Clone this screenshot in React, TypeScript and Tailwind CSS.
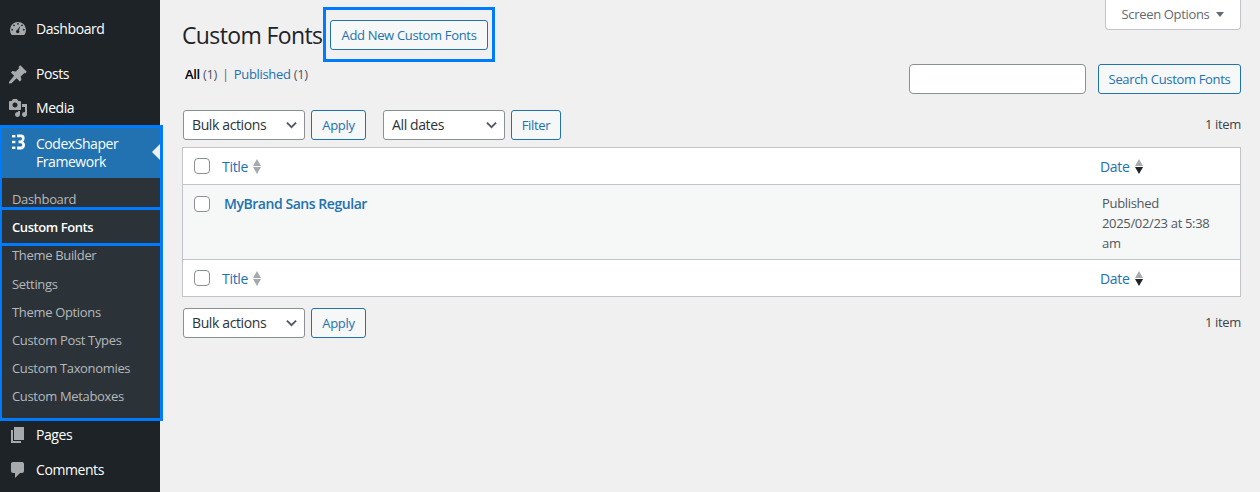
import type { ReactNode } from "react";

const subItems = ["Theme Builder", "Settings", "Theme Options", "Custom Post Types", "Custom Taxonomies", "Custom Metaboxes"];

function GaugeIcon() {
  return (
    <svg viewBox="0 0 20 20" className="w-5 h-5" fill="#a7aaad">
      <path fillRule="evenodd" d="M3.8 16A8 8 0 1 1 16.200 16ZM10 3.900a.9.9 0 1 0 0 1.800.9.9 0 0 0 0-1.800ZM6 5.400a.9.9 0 1 0 0 1.800.9.9 0 0 0 0-1.800ZM14 5.400a.9.9 0 1 0 0 1.800.9.9 0 0 0 0-1.800ZM4.200 9.800a.9.9 0 1 0 0 1.800.9.9 0 0 0 0-1.800ZM15.800 9.800a.9.9 0 1 0 0 1.800.9.9 0 0 0 0-1.800ZM12.300 6.800 9.200 11.100a1.600 1.600 0 1 0 1.700.5Z" />
    </svg>
  );
}

function PinIcon() {
  return (
    <svg viewBox="0 0 20 20" className="w-5 h-5" fill="#a7aaad">
      <path d="M10.400 3 12.300 1.200 18.800 7.700 17 9.600 16.400 9 12.700 12.400 13.400 15.900 11.800 17.400 8.600 14.200 3.500 19.300 1 19.400 1 17.900 6.100 11.700 2.900 8.500 4.400 7 7.900 7.600 11.300 3.900Z" />
    </svg>
  );
}

function MediaIcon() {
  return (
    <svg viewBox="0 0 20 20" className="w-5 h-5" fill="#a7aaad">
      <path d="M13 11V4c0-.55-.45-1-1-1h-1.670L9 1H5L3.670 3H2c-.55 0-1 .45-1 1v7c0 .55.45 1 1 1h10c.55 0 1-.45 1-1zM7 4.500c1.380 0 2.500 1.120 2.500 2.500S8.380 9.500 7 9.500 4.500 8.380 4.500 7 5.620 4.500 7 4.500zM14 6h5v10.500c0 1.380-1.120 2.500-2.500 2.500S14 17.880 14 16.500s1.120-2.500 2.500-2.500c.17 0 .34.02.5.05V9h-3V6zm-4 8.050V13h2v3.500c0 1.380-1.120 2.500-2.500 2.500S7 17.880 7 16.500 8.120 14 9.500 14c.17 0 .34.02.5.05z" />
    </svg>
  );
}

function PagesIcon() {
  return (
    <svg viewBox="0 0 20 20" className="w-5 h-5" fill="#a7aaad">
      <path d="M6 15V2h10v13H6zm-1 1h8v2H3V5h2v11z" />
    </svg>
  );
}

function CommentsIcon() {
  return (
    <svg viewBox="0 0 20 20" className="w-5 h-5" fill="#a7aaad">
      <path d="M5 2h9c1.100 0 2 .9 2 2v7c0 1.100-.9 2-2 2h-2l-5 5v-5H5c-1.100 0-2-.9-2-2V4c0-1.100.9-2 2-2z" />
    </svg>
  );
}

function BrandIcon() {
  return (
    <svg viewBox="0 0 13 16" className="w-[13px] h-4 -mt-[1px]" fill="#fff">
      <rect x="0" y="1" width="3.400" height="2.400" />
      <rect x="0" y="6.800" width="3.400" height="2.400" />
      <rect x="0" y="12.600" width="3.400" height="2.400" />
      <path d="M5 .5H9.200C11.500 .5 12.600 2 12.600 4C12.600 5.600 12 6.600 11.200 7.600C12.200 8.500 13 9.600 13 11C13 13.600 11.400 15.500 9 15.500H5V12.600H8.800C9.800 12.600 10.200 11.900 10.200 11C10.200 10 9.700 9.300 8.800 9.300H6.500V6.400H8.800C9.600 6.400 9.900 5.600 9.900 4.800C9.900 4 9.600 3.300 8.800 3.300H5Z" />
    </svg>
  );
}

function MenuItem({ icon, label, className }: { icon: ReactNode; label: string; className: string }) {
  return (
    <div className={`flex items-center text-white text-[14px] tracking-[-0.42px] ${className}`}>
      <span className="w-9 flex justify-center">{icon}</span>
      <span className="-mt-[1px]">{label}</span>
    </div>
  );
}

function SortArrows({ active }: { active?: boolean }) {
  return (
    <span className="flex flex-col gap-[1px] ml-[5px]">
      <span className="w-0 h-0 border-x-[4.5px] border-x-transparent border-b-[7px] border-b-[#a7aaad]" />
      <span className={`w-0 h-0 border-x-[4.5px] border-x-transparent border-t-[7px] ${active ? "border-t-[#1d2327]" : "border-t-[#a7aaad]"}`} />
    </span>
  );
}

function OutlineButton({ label, className }: { label: string; className: string }) {
  return (
    <button className={`h-[30px] pt-[1px] border border-[#2271b1] rounded-[3px] bg-[#f6f7f7] text-[#2271b1] text-[13px] ${className}`}>
      {label}
    </button>
  );
}

function FakeSelect({ label }: { label: string }) {
  return (
    <div className="w-[122px] h-[30px] bg-white border border-[#8c8f94] rounded-[3px] flex items-center justify-between pl-2 pr-[7px] text-[14px] tracking-[-0.38px] text-[#2c3338]">
      <span className="-mt-[1px]">{label}</span>
      <svg viewBox="0 0 12 8" className="w-[11px] h-[8px]" fill="none" stroke="#50575e" strokeWidth="2">
        <path d="M1 1.500 6 6.300 11 1.500" />
      </svg>
    </div>
  );
}

function Checkbox() {
  return <span className="block w-4 h-4 bg-white border border-[#8c8f94] rounded-[4px]" />;
}

function HeaderRow({ top }: { top?: boolean }) {
  return (
    <div className={`flex h-[37px] bg-white ${top ? "border-b" : "border-t"} border-[#c3c4c7]`}>
      <div className="flex flex-1 items-center pl-[11px]">
        <Checkbox />
        <span className="ml-[12px] text-[14px] tracking-[-0.3px] text-[#2271b1]">Title</span>
        <SortArrows />
      </div>
      <div className="flex w-[140px] items-center">
        <span className="text-[14px] tracking-[-0.3px] text-[#2271b1]">Date</span>
        <SortArrows active />
      </div>
    </div>
  );
}

export default function App() {
  return (
    <div
      className="relative flex w-[1260px] h-[492px] overflow-hidden bg-[#f0f0f1] text-[13px] tracking-[-0.33px] text-[#3c434a]"
      style={{ fontFamily: '"Open Sans", "Noto Sans", sans-serif' }}
    >
      {/* Admin menu */}
      <aside className="w-40 shrink-0 bg-[#1d2327] pt-[12px]">
        <MenuItem icon={<GaugeIcon />} label="Dashboard" className="h-[34px]" />
        <div className="h-[11px]" />
        <MenuItem icon={<PinIcon />} label="Posts" className="h-[34px]" />
        <MenuItem icon={<MediaIcon />} label="Media" className="h-[34px]" />
        <div className="relative h-[53px] bg-[#2271b1] text-white text-[14px] tracking-[-0.45px] leading-[18px] flex pt-[10px]">
          <span className="w-9 flex justify-center pl-[1px]"><BrandIcon /></span>
          <span>CodexShaper<br />Framework</span>
          <span className="absolute right-0 top-[19px] w-0 h-0 border-y-[8px] border-y-transparent border-r-[8px] border-r-[#f0f0f1]" />
        </div>
        <div className="bg-[#2c3338] h-[242px] pt-[5.7px] text-[13px] text-[#b4b9be]">
          <div className="h-[28.2px] flex items-center pl-3 pt-[4px]">Dashboard</div>
          <div className="h-[28.2px] flex items-center pl-3 pt-[4px] font-semibold tracking-[-0.42px] text-white">Custom Fonts</div>
          {subItems.map((item) => (
            <div key={item} className="h-[28.2px] flex items-center pl-3 pt-[4px]">{item}</div>
          ))}
        </div>
        <MenuItem icon={<PagesIcon />} label="Pages" className="h-[34px] mt-[-2px]" />
        <MenuItem icon={<CommentsIcon />} label="Comments" className="h-[34px] mt-[1px]" />
      </aside>

      {/* Annotation boxes */}
      <div className="absolute left-[-1px] top-[125px] w-[164px] h-[85px] border-[3px] border-[#007bff]" />
      <div className="absolute left-[-1px] top-[207px] w-[164px] h-[39px] border-[3px] border-[#007bff]" />
      <div className="absolute left-[-1px] top-[243px] w-[164px] h-[178px] border-[3px] border-[#007bff]" />

      {/* Content */}
      <main className="flex-1 min-w-0 pl-[22px] pr-[19px] relative">
        <div className="absolute right-[19px] top-0 w-[136px] h-[30px] bg-white border border-t-0 border-[#c3c4c7] rounded-b-[4px] flex items-center justify-center text-[#646970] text-[13px]">
          Screen Options
          <span className="ml-[7px] w-0 h-0 border-x-[4px] border-x-transparent border-t-[5px] border-t-[#646970]" />
        </div>

        <div className="flex items-center h-[30px] mt-[20px]">
          <h1 className="w-[141px] text-[23px] tracking-[-0.62px] font-normal text-[#1d2327] leading-[30px]">Custom Fonts</h1>
          <div className="pt-[10px] pb-[9px] px-[4px] border-[3px] border-[#007bff] -mt-[13px] -mb-[12px]">
            <OutlineButton label="Add New Custom Fonts" className="block w-[158px]" />
          </div>
        </div>

        <div className="flex items-start justify-between mt-[14px] h-[46px]">
          <div className="ml-[3px] mt-[1px] leading-[18px] text-[#50575e]">
            <span className="font-semibold text-[#000]">All</span> (1)
            <span className="text-[#646970] mx-[5px]">|</span>
            <span className="text-[#2271b1]">Published</span> (1)
          </div>
          <div className="flex gap-[12px]">
            <div className="w-[177px] h-[30px] bg-white border border-[#8c8f94] rounded-[4px]" />
            <OutlineButton label="Search Custom Fonts" className="w-[143px]" />
          </div>
        </div>

        <div className="flex items-center justify-between h-[30px] pl-[1px]">
          <div className="flex items-center">
            <FakeSelect label="Bulk actions" />
            <OutlineButton label="Apply" className="w-[55px] ml-[6px]" />
            <div className="ml-[17px]"><FakeSelect label="All dates" /></div>
            <OutlineButton label="Filter" className="w-[50px] ml-[6px]" />
          </div>
          <span>1 item</span>
        </div>

        <div className="mt-[7px] border border-[#c3c4c7]">
          <HeaderRow top />
          <div className="flex h-[74px] bg-[#f6f7f7]">
            <div className="flex flex-1 items-start pl-[11px] pt-[11px]">
              <Checkbox />
              <span className="ml-[14px] -mt-[3px] text-[14px] tracking-[-0.45px] font-semibold text-[#2271b1]">MyBrand Sans Regular</span>
            </div>
            <div className="w-[140px] pt-[8px] pl-[2px] pr-[14px] leading-[20px] text-[#50575e]">
              Published<br />2025/02/23 at 5:38 am
            </div>
          </div>
          <HeaderRow />
        </div>

        <div className="flex items-center justify-between h-[30px] mt-[11px] pl-[1px]">
          <div className="flex items-center">
            <FakeSelect label="Bulk actions" />
            <OutlineButton label="Apply" className="w-[55px] ml-[6px]" />
          </div>
          <span>1 item</span>
        </div>
      </main>
    </div>
  );
}
